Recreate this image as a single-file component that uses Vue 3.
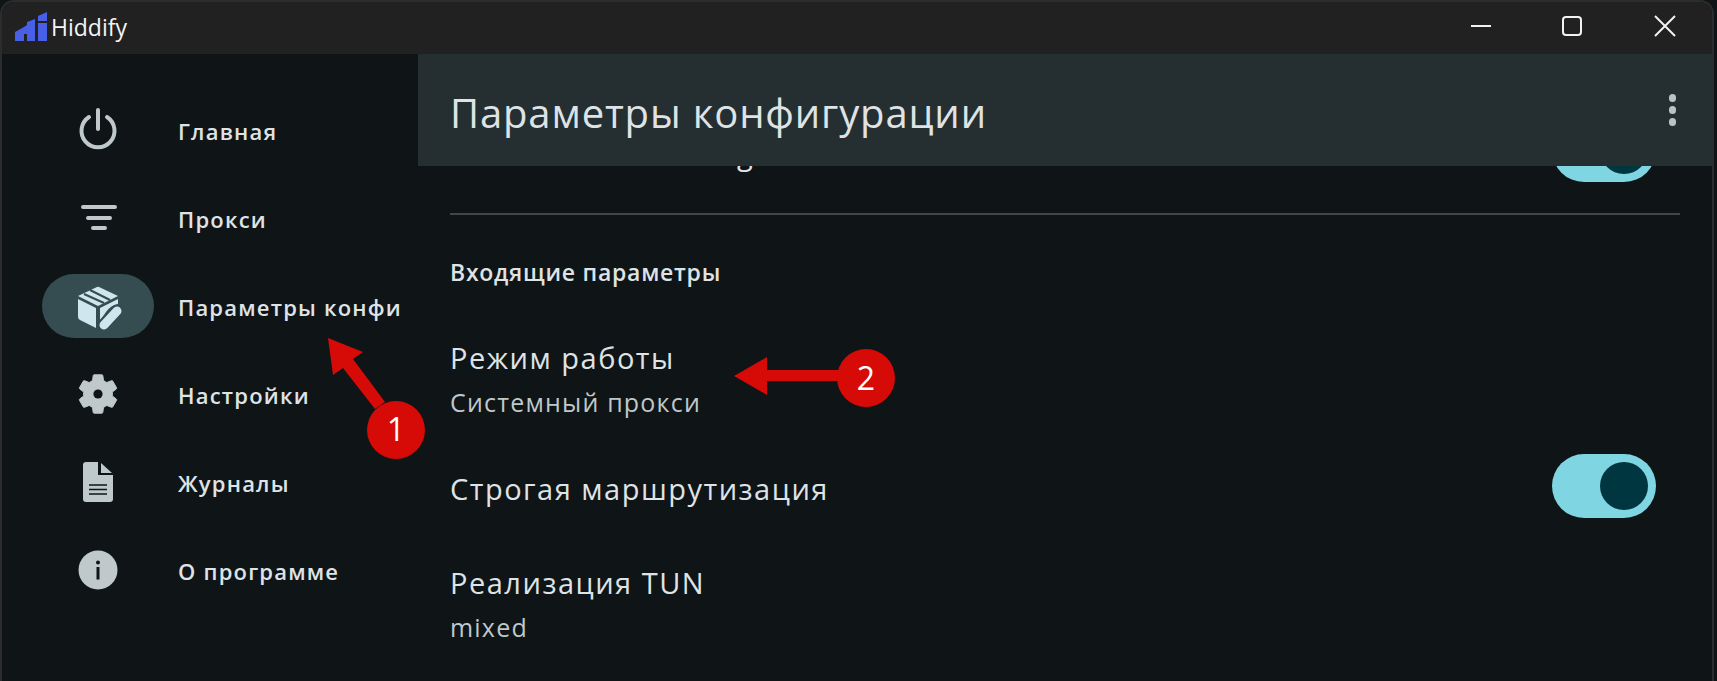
<template>
  <div class="window">
    <header class="titlebar">
      <div class="brand">
        <svg class="logo" width="34" height="30" viewBox="14 11 34 30">
          <path d="M15 40V31L24 26L27 24V21L35 18V40H27V33H24V40Z" />
          <path d="M38 20V15L47 11V20Z" />
          <path d="M38 22H47V40H38Z" />
        </svg>
        <span class="app-name">Hiddify</span>
      </div>
      <div class="controls">
        <button class="ctl">
          <svg width="22" height="22" viewBox="0 0 22 22"><path d="M1 11H21" /></svg>
        </button>
        <button class="ctl">
          <svg width="22" height="22" viewBox="0 0 22 22"><rect x="2" y="2" width="18" height="18" rx="3" /></svg>
        </button>
        <button class="ctl">
          <svg width="22" height="22" viewBox="0 0 22 22"><path d="M1 1L21 21M21 1L1 21" /></svg>
        </button>
      </div>
    </header>

    <div class="body">
      <nav class="sidebar">
        <div v-for="item in navItems" :key="item.key" class="nav-row" :class="{ active: item.key === 'config' }">
          <div class="pill">
            <svg v-if="item.key === 'home'" width="48" height="48" viewBox="0 0 48 48" class="stroke">
              <path d="M15 11A16.5 16.5 0 1 0 33 11" />
              <path d="M24 4V23" />
            </svg>
            <svg v-else-if="item.key === 'proxy'" width="48" height="48" viewBox="0 0 48 48" class="stroke">
              <path d="M9 13H41M14 24H36M19 34H31" />
            </svg>
            <svg v-else-if="item.key === 'config'" width="48" height="48" viewBox="0 0 48 48" class="box">
              <path d="M23 5Q24 4.6 25 5L44 14L24 24L4 14Z" />
              <path d="M4 17L22 26V46L6 38Q4 37 4 35Z" />
              <path d="M26 26L44 17V22Q37 23 32 30L26 39Z" />
              <path class="tape" d="M16 8L36 18M10 12L30 21" />
              <path class="pen-gap" d="M30 43L43 29" />
              <path class="pen" d="M30 43L43 29" />
            </svg>
            <svg v-else-if="item.key === 'settings'" width="48" height="48" viewBox="0 0 24 24" class="gear">
              <path d="M19.14 12.94c.04-.3.06-.61.06-.94 0-.32-.02-.64-.07-.94l2.03-1.58c.18-.14.23-.41.12-.61l-1.92-3.32c-.12-.22-.37-.29-.59-.22l-2.39.96c-.5-.38-1.03-.7-1.62-.94l-.36-2.54c-.04-.24-.24-.41-.48-.41h-3.84c-.24 0-.43.17-.47.41l-.36 2.54c-.59.24-1.13.57-1.62.94l-2.39-.96c-.22-.08-.47 0-.59.22L2.74 8.87c-.12.21-.08.47.12.61l2.03 1.58c-.05.3-.09.63-.09.94s.02.64.07.94l-2.03 1.58c-.18.14-.23.41-.12.61l1.92 3.32c.12.22.37.29.59.22l2.39-.96c.5.38 1.03.7 1.62.94l.36 2.54c.05.24.24.41.48.41h3.84c.24 0 .44-.17.47-.41l.36-2.54c.59-.24 1.13-.56 1.62-.94l2.39.96c.22.08.47 0 .59-.22l1.92-3.32c.12-.22.07-.47-.12-.61l-2.01-1.58z" />
              <circle class="hole" cx="12" cy="12" r="2.3" />
            </svg>
            <svg v-else-if="item.key === 'logs'" width="48" height="48" viewBox="0 0 48 48" class="doc">
              <path d="M12 4H24V17H39V41Q39 44 36 44H12Q9 44 9 41V7Q9 4 12 4Z" />
              <path d="M27 5L38 15H27Z" />
              <path class="doc-lines" d="M15 27H33M15 31.5H33M15 36H33" />
            </svg>
            <svg v-else width="48" height="48" viewBox="0 0 48 48" class="info">
              <circle cx="24" cy="24" r="19.5" />
              <circle class="i-mark" cx="24" cy="16.5" r="2" />
              <rect class="i-mark" x="22.5" y="21" width="3" height="12.5" />
            </svg>
          </div>
          <span class="nav-label">{{ item.label }}</span>
        </div>
      </nav>

      <main class="content">
        <div class="appbar">
          <h1>Параметры конфигурации</h1>
          <div class="more"><i></i><i></i><i></i></div>
        </div>

        <div class="list">
          <div class="row switch-row under-bar">
            <span class="row-title">Включить Tunneling</span>
            <div class="toggle"><div class="thumb"></div></div>
          </div>
          <div class="divider"></div>
          <h2>Входящие параметры</h2>
          <div class="row text-row">
            <span class="row-title">Режим работы</span>
            <span class="row-sub">Системный прокси</span>
          </div>
          <div class="row switch-row">
            <span class="row-title">Строгая маршрутизация</span>
            <div class="toggle"><div class="thumb"></div></div>
          </div>
          <div class="row text-row">
            <span class="row-title">Реализация TUN</span>
            <span class="row-sub">mixed</span>
          </div>
        </div>
      </main>
    </div>

    <svg class="marks" width="1717" height="681" viewBox="0 0 1717 681">
      <path d="M328 338L363 352L353 359L385 402L375 409L343 368L333 375Z" />
      <circle cx="396" cy="430" r="29" />
      <text x="396" y="441">1</text>
      <path d="M734 376L767 357V370H860V381H767V395Z" />
      <circle cx="866" cy="378" r="29" />
      <text x="866" y="390">2</text>
    </svg>
  </div>
</template>

<script setup>
const navItems = [
  { key: 'home', label: 'Главная' },
  { key: 'proxy', label: 'Прокси' },
  { key: 'config', label: 'Параметры конфигурации' },
  { key: 'settings', label: 'Настройки' },
  { key: 'logs', label: 'Журналы' },
  { key: 'about', label: 'О программе' },
]
</script>

<style>
html, body {
  margin: 0;
  background: #0f1417;
}
</style>

<style scoped>
.window {
  position: relative;
  box-sizing: border-box;
  width: 1714px;
  height: 681px;
  overflow: hidden;
  border: 2px solid #2c2c2c;
  border-bottom: 0;
  border-radius: 14px 14px 0 0;
  background: #0f1417;
  font-family: "Open Sans", "Noto Sans", sans-serif;
  color: #dfe3e5;
}

.titlebar {
  display: flex;
  justify-content: space-between;
  height: 52px;
  background: #212121;
}
.brand {
  display: flex;
  align-items: center;
  padding-left: 12px;
}
.logo {
  fill: #4860e8;
  margin-top: -2px;
}
.app-name {
  margin-left: 3px;
  font-size: 23px;
  color: #f4f4f4;
  margin-top: -2px;
}
.controls {
  display: flex;
}
.ctl {
  display: flex;
  align-items: center;
  justify-content: center;
  width: 92px;
  padding: 0 0 4px;
  background: none;
  border: 0;
}
.ctl:first-child {
  width: 90px;
}
.ctl:last-child {
  width: 94px;
}
.ctl svg {
  fill: none;
  stroke: #f2f2f2;
  stroke-width: 2;
}

.body {
  display: flex;
  height: 627px;
}

.sidebar {
  flex: 0 0 416px;
  box-sizing: border-box;
  padding: 32px 0 0 40px;
  overflow: hidden;
}
.nav-row {
  display: flex;
  align-items: center;
  height: 88px;
}
.pill {
  display: flex;
  align-items: center;
  justify-content: center;
  flex: 0 0 112px;
  height: 64px;
  border-radius: 32px;
}
.active .pill {
  background: #354c50;
}
.nav-label {
  display: block;
  width: 224px;
  margin: 2px 0 0 24px;
  overflow: hidden;
  white-space: nowrap;
  font-size: 22px;
  font-weight: 600;
  letter-spacing: 1.2px;
}

.stroke {
  fill: none;
  stroke: #bfc8ca;
  stroke-width: 4;
  stroke-linecap: round;
}
.box {
  fill: #cfe6ee;
}
.box .tape {
  fill: none;
  stroke: #354c50;
  stroke-width: 2;
}
.box .pen-gap {
  fill: none;
  stroke: #354c50;
  stroke-width: 13;
  stroke-linecap: round;
}
.box .pen {
  fill: none;
  stroke: #cfe6ee;
  stroke-width: 9;
  stroke-linecap: round;
}
.gear {
  fill: #bfc8ca;
  stroke: #bfc8ca;
  stroke-width: 0.5;
}
.gear .hole {
  fill: #0f1417;
  stroke: none;
}
.doc {
  fill: #bfc8ca;
}
.doc .doc-lines {
  fill: none;
  stroke: #0f1417;
  stroke-width: 1.6;
}
.info {
  fill: #bfc8ca;
}
.info .i-mark {
  fill: #0f1417;
}

.content {
  position: relative;
  flex: 1;
  min-width: 0;
  overflow: hidden;
}
.appbar {
  position: absolute;
  top: 0;
  left: 0;
  right: 0;
  z-index: 1;
  display: flex;
  align-items: center;
  justify-content: space-between;
  height: 112px;
  padding: 0 36px 0 32px;
  background: #252f31;
}
.appbar h1 {
  margin: 4px 0 0;
  font-size: 40px;
  font-weight: 400;
  letter-spacing: 0.85px;
}
.more {
  display: flex;
  flex-direction: column;
  gap: 4.5px;
}
.more i {
  width: 7.5px;
  height: 7.5px;
  border-radius: 50%;
  background: #b9c3c5;
}

.list {
  display: flex;
  flex-direction: column;
  padding: 52px 32px 0;
}
.row {
  display: flex;
}
.row-title {
  font-size: 29px;
  letter-spacing: 1.5px;
  line-height: 36px;
}
.row-sub {
  margin-top: 9px;
  font-size: 25px;
  letter-spacing: 1.2px;
  line-height: 34px;
  color: #bfc8ca;
}
.switch-row {
  flex: 0 0 88px;
  align-items: center;
  justify-content: space-between;
  margin-bottom: 14px;
  padding-right: 24px;
}
.switch-row .row-title {
  margin-top: 5px;
}
.under-bar .row-title {
  margin-top: 8px;
  letter-spacing: 1.2px;
}
.text-row {
  flex-direction: column;
  margin: 21px 0 23px;
}
.toggle {
  box-sizing: border-box;
  display: flex;
  justify-content: flex-end;
  align-items: center;
  width: 104px;
  height: 64px;
  padding: 0 8px;
  border-radius: 32px;
  background: #80d5e2;
}
.thumb {
  width: 48px;
  height: 48px;
  border-radius: 50%;
  background: #00363f;
}
.divider {
  flex: 0 0 2px;
  margin-top: 5px;
  background: #3f4849;
}
h2 {
  margin: 41px 0 31px;
  font-size: 23px;
  font-weight: 600;
  letter-spacing: 0.75px;
  line-height: 32px;
}

.marks {
  position: absolute;
  top: -2px;
  left: -2px;
  z-index: 2;
  fill: #d60a07;
}
.marks text {
  font-size: 32px;
  fill: #fff;
  text-anchor: middle;
}
</style>
